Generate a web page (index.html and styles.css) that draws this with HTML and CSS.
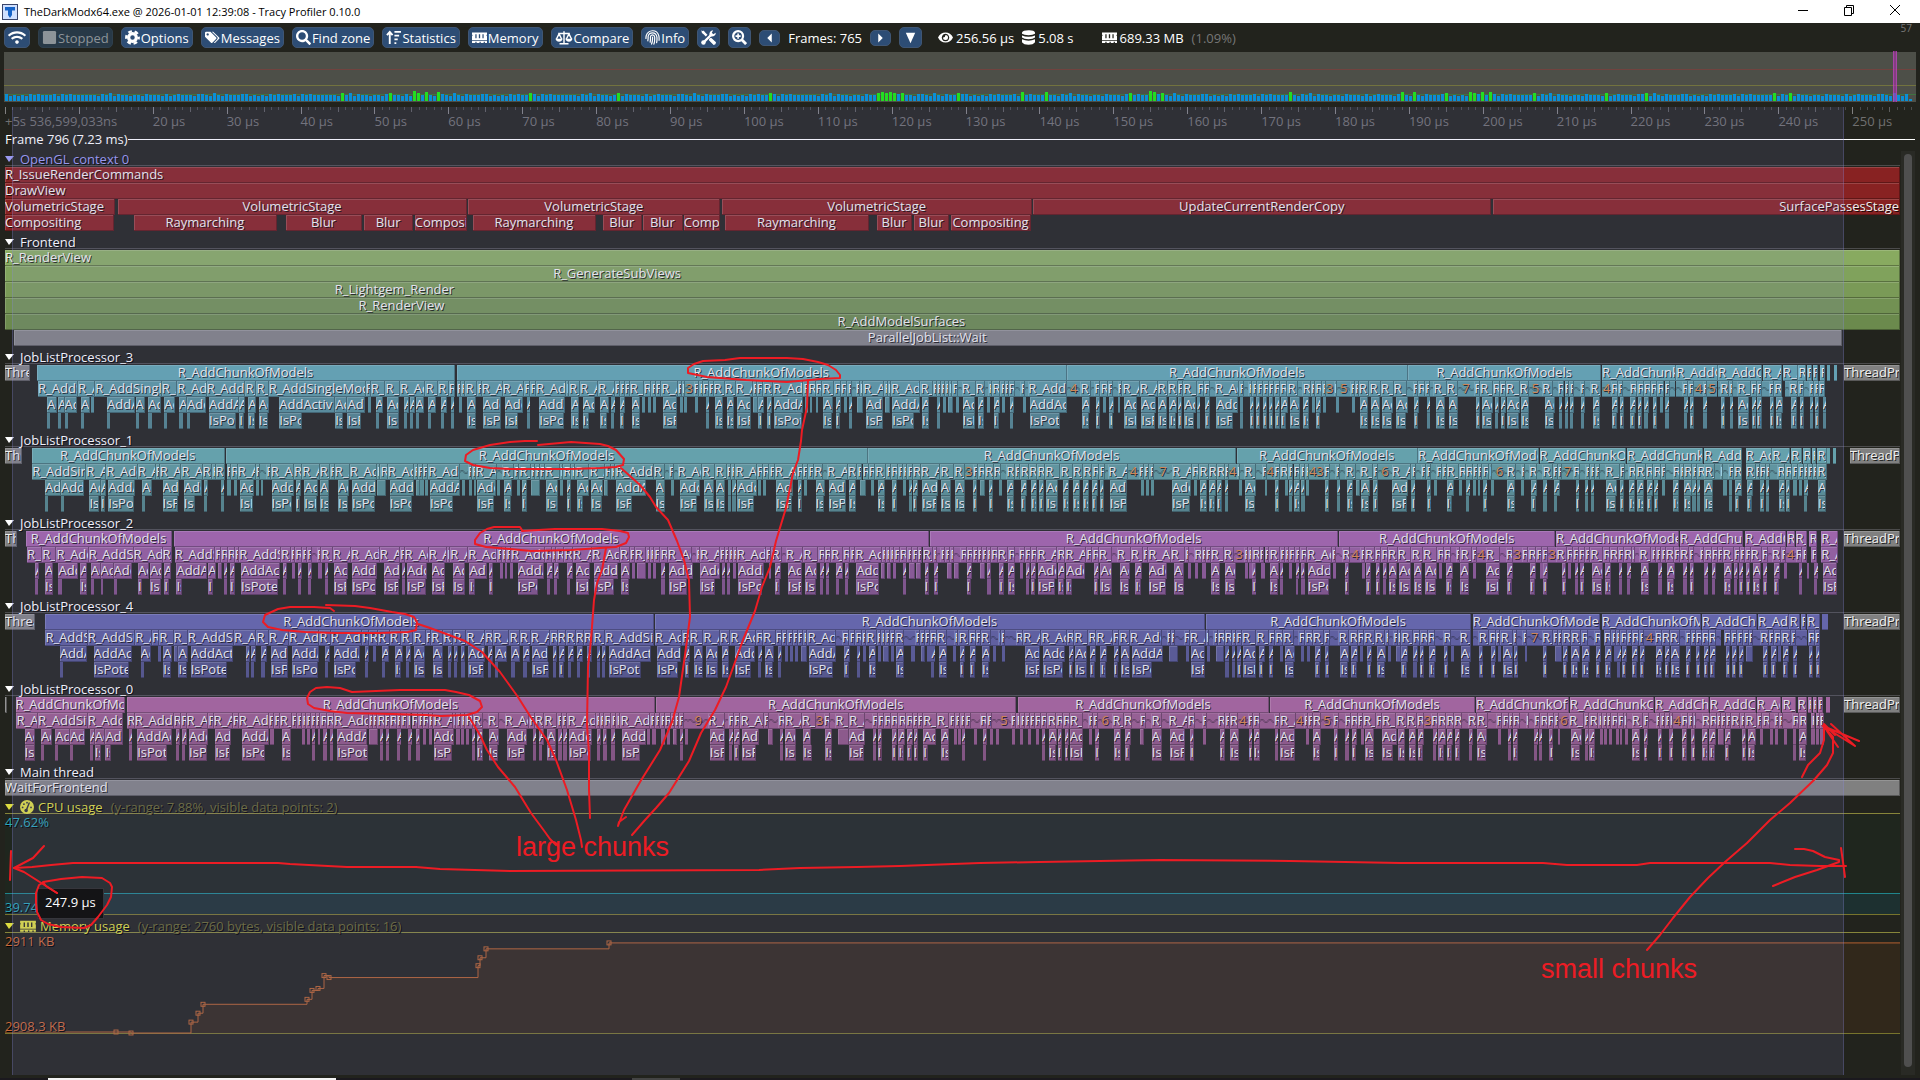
FILE: index.html
```html
<!DOCTYPE html>
<html lang="en">
<head>
  <meta charset="UTF-8" />
  <meta name="viewport" content="width=device-width, initial-scale=1" />
  <title>TheDarkModx64.exe - Tracy Profiler 0.10.0</title>
  <link rel="stylesheet" href="styles.css">
</head>
<body>
  <!-- Icons -->
  <svg class="defs" aria-hidden="true">
    <symbol id="i-wifi" viewBox="0 0 640 512"><path fill="currentColor" d="M634.91 154.88C457.74-8.99 182.19-8.93 5.09 154.88c-6.66 6.16-6.79 16.59-.35 22.98l34.24 33.97c6.14 6.1 16.02 6.23 22.4.38 145.92-133.68 371.3-133.71 517.25 0 6.38 5.85 16.26 5.71 22.4-.38l34.24-33.97c6.43-6.39 6.3-16.82-.36-22.98zM320 352c-35.35 0-64 28.65-64 64s28.65 64 64 64 64-28.65 64-64-28.65-64-64-64zm202.67-83.59c-115.26-101.93-290.21-101.82-405.34 0-6.9 6.1-7.12 16.69-.57 23.15l34.44 33.99c6 5.92 15.66 6.32 22.05.8 83.95-72.57 209.74-72.41 293.49 0 6.39 5.52 16.05 5.13 22.05-.8l34.44-33.99c6.56-6.46 6.33-17.06-.56-23.15z"/></symbol>
    <symbol id="i-stop" viewBox="0 0 16 16"><rect x="1" y="1" width="14" height="14" rx="1.5" fill="currentColor"/></symbol>
    <symbol id="i-gear" viewBox="0 0 16 16"><circle cx="8" cy="8" r="6.6" fill="none" stroke="currentColor" stroke-width="2.6" stroke-dasharray="3.9 3.01" stroke-dashoffset="1.9"/><circle cx="8" cy="8" r="4.1" fill="none" stroke="currentColor" stroke-width="3.4"/></symbol>
    <symbol id="i-tags" viewBox="0 0 18 16"><path fill="currentColor" fill-rule="evenodd" d="M0 2.500Q0 1 1.500 1H6.500L13.500 8Q14.200 8.800 13.500 9.600L8.800 14.300Q8 15 7.200 14.300L0 7.200ZM3.200 2.800A1.400 1.400 0 1 0 3.210 2.800Z"/><path fill="currentColor" d="M8.200 1H9.800L17 8Q17.800 8.800 17 9.600L12.300 14.300Q11.500 15 10.700 14.300L14.700 10.200Q16 8.800 14.700 7.500Z"/></symbol>
    <symbol id="i-search" viewBox="0 0 512 512"><path fill="currentColor" d="M505 442.700L405.300 343c-4.500-4.500-10.600-7-17-7H372c27.600-35.300 44-79.700 44-128C416 93.100 322.900 0 208 0S0 93.100 0 208s93.100 208 208 208c48.300 0 92.700-16.400 128-44v16.300c0 6.400 2.500 12.500 7 17l99.700 99.700c9.400 9.400 24.600 9.400 33.900 0l28.300-28.300c9.400-9.400 9.400-24.600.1-34zM208 336c-70.700 0-128-57.200-128-128 0-70.700 57.200-128 128-128 70.700 0 128 57.200 128 128 0 70.700-57.200 128-128 128z"/></symbol>
    <symbol id="i-sort" viewBox="0 0 16 16"><path fill="none" stroke="currentColor" stroke-width="2" d="M4 15V2M1 5.500L4 2l3 3.500M9 2h7M9 6h5M9 10h3.500M9 14h2"/></symbol>
    <symbol id="i-mem" viewBox="0 0 18 16"><path fill="currentColor" fill-rule="evenodd" d="M0 2H18V4.500Q16.500 5.300 18 6.500V11H0V6.500Q1.500 5.300 0 4.500ZM4 4V9H5.500V4ZM8.200 4V9H9.800V4ZM12.500 4V9H14V4ZM0 12H18V14.500H15.500V13H14V14.500H10.500V13H9V14.500H5.500V13H4V14.500H0Z"/></symbol>
    <symbol id="i-scale" viewBox="0 0 20 16"><path fill="none" stroke="currentColor" stroke-width="1.600" d="M10 1V14M5 15H15M3.500 3.500H16.500M4.500 4L1.500 10M4.500 4L7.500 10M15.500 4L12.500 10M15.500 4L18.500 10"/><path fill="currentColor" d="M0.500 9.500H8.500Q7.500 12.800 4.500 12.800T0.500 9.500ZM11.500 9.500H19.500Q18.500 12.800 15.500 12.800T11.500 9.500Z"/></symbol>
    <symbol id="i-finger" viewBox="0 0 16 16"><path fill="none" stroke="currentColor" stroke-width="1.300" stroke-linecap="round" d="M8 7.500Q8.300 12 7 15M5.500 13Q6 10 5.700 7.500Q6 5.300 8 5.300T10.300 7.500Q10.600 12 9.500 15M3 11.500Q3.500 9 3.300 7Q4 3 8 3T12.700 7.500Q13 10.500 12.400 13.500M1 9Q1 7.500 1.300 6Q3 1 8 .8T14.700 6Q15.200 8 15 11"/></symbol>
    <symbol id="i-tools" viewBox="0 0 16 16"><path fill="none" stroke="currentColor" stroke-width="2.500" d="M1.500 1.500L6 6M9.500 9.500L14.500 14.500M2 14L12 4"/><path fill="currentColor" d="M0 .5L3.500 1.500L4.500 4.500L2 4ZM9 9L11 8.500L16 13Q16 15.500 13.500 16L8.500 11ZM9 5.500Q8.500 1 13 .2L11.500 3L13 4.500L15.800 3Q15.500 7.500 10.500 7Z"/><circle cx="2.600" cy="13.400" r="2.400" fill="currentColor"/></symbol>
    <symbol id="i-plus" viewBox="0 0 16 16"><circle cx="6.500" cy="6.500" r="5.300" fill="none" stroke="currentColor" stroke-width="2.400"/><path fill="none" stroke="currentColor" stroke-width="1.700" d="M6.500 3.800V9.200M3.800 6.500H9.200"/><path stroke="currentColor" stroke-width="3" d="M10.500 10.500L15 15"/></symbol>
    <symbol id="i-left" viewBox="0 0 16 16"><path fill="currentColor" d="M11 2V14L5 8Z"/></symbol>
    <symbol id="i-right" viewBox="0 0 16 16"><path fill="currentColor" d="M5 2V14L11 8Z"/></symbol>
    <symbol id="i-down" viewBox="0 0 16 16"><path fill="currentColor" d="M3 3H13L8 14Z"/></symbol>
    <symbol id="i-eye" viewBox="0 0 18 16"><path fill="currentColor" fill-rule="evenodd" d="M0 8Q3 2 9 2T18 8Q15 14 9 14T0 8ZM9 3.500A4.500 4.500 0 1 0 9.010 3.500Z"/><path fill="currentColor" d="M9 5A3 3 0 1 1 6 8Q8.500 8.200 9 5Z"/></symbol>
    <symbol id="i-db" viewBox="0 0 14 16"><path fill="currentColor" d="M0 2.500Q1 .5 7 .3T14 2.500V4Q12 5.500 7 5.500T0 4ZM0 5.800Q3 7.200 7 7.200T14 5.800V8Q12 9.800 7 9.800T0 8ZM0 10Q3 11.500 7 11.500T14 10V13Q12 15.700 7 15.700T0 13Z"/></symbol>
    <symbol id="i-gauge" viewBox="0 0 16 16"><circle cx="8" cy="8" r="8" fill="currentColor"/><path fill="none" stroke="#2f3035" stroke-width="1.600" stroke-linecap="round" d="M7.500 11L10.500 3.500"/><g fill="#2f3035"><circle cx="7" cy="12" r="2"/><circle cx="3" cy="8.500" r="1"/><circle cx="4.500" cy="4.800" r="1"/><circle cx="8" cy="3" r="1"/><circle cx="12.600" cy="8.500" r="1"/></g></symbol>
  </svg>

  <header class="titlebar">
    <svg class="app-icon" viewBox="0 0 16 16"><rect x=".5" y=".5" width="15" height="15" fill="#cfe0ff" stroke="#39456b"/><path fill="#1664c8" d="M3 3H13V6.500H10V11L8 14L6 11V6.500H3Z"/></svg>
    <span class="title">TheDarkModx64.exe @ 2026-01-01 12:39:08 - Tracy Profiler 0.10.0</span>
    <button class="win" aria-label="Minimize"><svg viewBox="0 0 12 12"><path d="M1 6.500H11"/></svg></button>
    <button class="win" aria-label="Restore"><svg viewBox="0 0 12 12"><path d="M1.500 3.500H8.500V11.500H1.500ZM3.500 3.500V1.500H10.500V9.500H8.500"/></svg></button>
    <button class="win" aria-label="Close"><svg viewBox="0 0 12 12"><path d="M1 1L11 11M11 1L1 11"/></svg></button>
  </header>

  <nav class="toolbar">
    <button class="btn" aria-label="Connection"><svg class="wide"><use href="#i-wifi"/></svg></button>
    <button class="btn" disabled><svg><use href="#i-stop"/></svg>Stopped</button>
    <button class="btn"><svg><use href="#i-gear"/></svg>Options</button>
    <button class="btn"><svg><use href="#i-tags"/></svg>Messages</button>
    <button class="btn"><svg><use href="#i-search"/></svg>Find zone</button>
    <button class="btn"><svg><use href="#i-sort"/></svg>Statistics</button>
    <button class="btn"><svg><use href="#i-mem"/></svg>Memory</button>
    <button class="btn"><svg class="wide"><use href="#i-scale"/></svg>Compare</button>
    <button class="btn"><svg><use href="#i-finger"/></svg>Info</button>
    <button class="btn" aria-label="Tools"><svg><use href="#i-tools"/></svg></button>
    <button class="btn" aria-label="Zoom"><svg><use href="#i-plus"/></svg></button>
    <button class="btn small" aria-label="Previous frame"><svg><use href="#i-left"/></svg></button>
    <span>Frames: 765</span>
    <button class="btn small" aria-label="Next frame"><svg><use href="#i-right"/></svg></button>
    <button class="btn" aria-label="Frame sets"><svg><use href="#i-down"/></svg></button>
    <span class="stat first"><svg><use href="#i-eye"/></svg>256.56 µs</span>
    <span class="stat"><svg class="slim"><use href="#i-db"/></svg>5.08 s</span>
    <span class="stat mem"><svg><use href="#i-mem"/></svg>689.33 MB</span>
    <span class="dim">(1.09%)</span>
    <span class="fps">57</span>
  </nav>

  <div class="frames" id="frames"></div>

  <main class="view">
    <div class="ruler" id="ruler"></div>
    <div class="frame-line">Frame 796 (7.23 ms)</div>
    <div class="scroller">
      <div class="tracks">
        <div id="tracks"></div>

        <section class="plot cpu">
          <button class="track-head"><svg><use href="#i-gauge"/></svg>CPU usage <small>(y-range: 7.88%, visible data points: 2)</small></button>
          <div class="plot-area">
            <span>47.62%</span>
            <div class="cpu-fill"><span>39.74%</span></div>
          </div>
        </section>

        <section class="plot memory">
          <button class="track-head"><svg class="wide"><use href="#i-mem"/></svg>Memory usage <small>(y-range: 2760 bytes, visible data points: 16)</small></button>
          <div class="plot-area">
            <svg class="chart" id="chart" viewBox="0 0 1895 100" preserveAspectRatio="none"></svg>
            <span>2911 KB</span>
            <span>2908.3 KB</span>
          </div>
        </section>
      </div>
      <div class="scrollbar"><div class="thumb"></div></div>
    </div>
    <div class="selection" id="selection"></div>
  </main>

  <footer class="taskbar"><div class="task"></div><div class="task dim-task"></div></footer>

  <div class="tooltip">247.9 µs</div>

  <!-- Pen notes over the whole window -->
  <svg class="notes" viewBox="0 0 1920 1080" preserveAspectRatio="none">
    <path d="M688 373L688 368L694 364L703 361L725 360L740 358L787 358L803 359L818 362L828 365L836 370L840 375L840 378L820 379L810 380L787 382L746 380L720 378L707 377L688 373"/>
    <path d="M808 380L807 407L802 430L801 441L798 460L793 473L786 508L776 541L770 567L762 587L755 611L743 640L726 687L715 710L701 733L689 761L669 793L656 808L645 820L632 835"/>
    <path d="M537 441L525 441L510 442L490 445L473 450L466 455L465 461L473 465L490 468L510 469L571 469L600 468L616 467L623 465L624 459L616 450L608 446L600 444L571 442L538 445"/>
    <path d="M621 468L640 485L650 497L656 507L668 520L677 541L684 560L689 580L690 617L685 655L679 697L672 722L660 750L640 782L624 810L618 826L619 822L626 817"/>
    <path d="M522 530L520 527L494 527L487 529L480 533L475 540L475 544L486 547L510 549L531 551L571 550L600 548L616 547L626 543L629 537L628 533L620 531L602 529L555 529L522 531"/>
    <path d="M606 548L602 570L597 583L594 600L591 640L588 667L587 725L589 753L589 790L590 818"/>
    <path d="M334 611L330 608L314 607L290 607L278 609L265 615L263 622L268 627L282 630L305 632L335 633L380 633L408 632L416 630L417 622L414 617L405 614L392 612L370 608L355 606L326 605"/>
    <path d="M418 624L430 628L449 635L465 641L482 652L500 672L518 697L530 716L547 740L556 760L567 790L576 820L581 840L582 847"/>
    <path d="M352 692L340 688L327 687L316 688L310 692L307 698L308 704L314 708L330 711L347 713L392 714L425 715L441 716L467 715L477 712L482 707L480 701L469 695L456 692L445 690L400 690L352 692"/>
    <path d="M469 717L480 735L487 750L498 767L515 787L531 813L545 832L550 839L556 845"/>
    <path d="M14 868L32 867L51 865L73 863L278 863L290 864L347 867L416 867L440 869L510 871L759 870L800 868L857 867L900 866L980 863L1040 862L1160 860L1290 861L1400 863L1543 863L1567 865L1637 865L1650 863L1770 863L1790 865L1820 866L1846 866"/>
    <path d="M44 846L33 858L14 868L24 872L57 893M11 851L10 880M1795 849L1804 849L1813 851L1825 857L1839 860L1839 862L1817 870L1795 877L1773 886M1841 848L1843 862L1845 877"/>
    <path d="M57 893L46 886L43 882L61 879L82 877L102 878L110 883L112 887L111 897L107 905L98 917L91 925L84 928L61 927L48 924L41 920L37 912L36 903L36 893L39 885L44 882"/>
    <path d="M1647 950L1660 935L1673 918L1690 897L1708 878L1725 862L1747 843L1770 820L1790 803L1814 780L1827 765L1833 753L1833 737L1823 726L1859 741M1823 726L1855 746L1831 724M1838 747L1827 731M1802 777L1808 765L1820 753L1824 740L1824 724L1835 735"/>
    <text x="516" y="856">large chunks</text>
    <text x="1541" y="978">small chunks</text>
  </svg>

  <script src="timeline.js"></script>
</body>
</html>
```
FILE: styles.css
```css
* { box-sizing: border-box; margin: 0; padding: 0; }
html, body {
  height: 100%;
  overflow: hidden;
}
body {
  display: flex;
  flex-direction: column;
  position: relative;
  background: #22231d;
  color: #fff;
  font-family: "Open Sans", "Noto Sans", sans-serif;
  font-size: 13px;
  line-height: 16px;
}
button {
  font: inherit;
  color: inherit;
  border: 0;
  background: none;
}
.defs { display: none; }

/* Window title */
.titlebar {
  display: flex;
  align-items: center;
  height: 23px;
  flex: none;
  padding-left: 2px;
  background: #fff;
  color: #000;
  font-size: 11px;
}
.app-icon { width: 16px; height: 16px; margin-right: 6px; }
.title { flex: 1; }
.win { width: 46px; height: 23px; padding-right: 4px; }
.win svg {
  width: 12px;
  height: 12px;
  fill: none;
  stroke: #000;
  stroke-width: 1;
}

/* Toolbar */
.toolbar {
  display: flex;
  align-items: center;
  gap: 8px;
  height: 29px;
  flex: none;
  padding: 0 8px 0 4px;
  white-space: nowrap;
}
.toolbar svg { width: 15px; height: 15px; flex: none; }
.toolbar svg.wide { width: 18px; }
.toolbar svg.slim { width: 13px; }
.btn {
  display: flex;
  align-items: center;
  gap: 1px;
  height: 21px;
  padding: 0 3px;
  background: #2d4d75;
  border: 1px solid #3f5674;
  border-radius: 5px;
}
.btn.small { height: 16px; padding: 0 2px; }
.btn.small svg { height: 12px; }
.btn:hover { background: #3a6294; }
.btn:disabled { background: #283947; border-color: #2f3f4c; color: #8d9499; }
.stat { display: flex; align-items: center; gap: 3px; }
.stat.first { margin-left: 8px; }
.stat.mem { margin-left: 20px; }
.dim { color: #777; }
.fps {
  margin-left: auto;
  align-self: flex-start;
  font-size: 10px;
  line-height: 11px;
  color: #777;
}

/* Frame time overview */
.frames {
  position: relative;
  display: flex;
  align-items: flex-end;
  height: 50px;
  flex: none;
  margin: 0 4px 5px;
  padding: 0 0 1px 1px;
  background:
    linear-gradient(#70433f, #70433f) 0 17px / 100% 1px no-repeat,
    linear-gradient(#72733f, #72733f) 0 33px / 100% 1px no-repeat,
    linear-gradient(#3f7340, #3f7340) 0 42px / 100% 1px no-repeat,
    #4d4f48;
}
.bar { flex: none; width: 3px; margin-right: 1px; background: #0a8fd6; }
.bar.slow { background: #22dd22; }
.frames .mark {
  position: absolute;
  top: -1px;
  bottom: 0;
  right: 19px;
  width: 4px;
  background: rgba(170, 50, 170, .6);
  border: solid rgba(200, 80, 200, .5);
  border-width: 0 1px;
}

/* Timeline */
.view {
  position: relative;
  display: flex;
  flex-direction: column;
  flex: 1;
  min-height: 0;
  margin: 0 5px 3px;
}
.ruler { display: flex; height: 23px; overflow: hidden; flex: none; color: #707070; line-height: 14px; }
.step { flex: none; white-space: nowrap; }
.step span { display: block; }
.ticks { display: flex; height: 7px; }
.ticks i { flex: 1; height: 3px; border-left: 1px solid #4a4a4a; }
.ticks i:nth-child(6) { height: 5px; border-color: #5c5c5c; }
.ticks i:first-child { height: 7px; border-color: #808080; }
.frame-line {
  display: flex;
  align-items: center;
  height: 18px;
  flex: none;
}
.frame-line::after { content: ""; flex: 1; height: 1px; background: #fff; }
.scroller { display: flex; flex: 1; min-height: 0; }
.tracks { flex: 1; min-width: 0; }
.scrollbar { width: 14px; margin: 3px 0 0 1px; padding: 3px 3px 8px; background: #292a25; }
.thumb { height: 100%; border-radius: 4px; background: #4f4f4f; }

.selection {
  position: absolute;
  top: 0;
  bottom: 0;
  background: rgba(136, 136, 221, .133);
  border: solid rgba(136, 136, 221, .27);
  border-width: 0 1px;
}

/* Thread tracks */
.track-head {
  display: flex;
  align-items: center;
  width: 100%;
  height: 19px;
  padding-top: 2px;
  text-align: left;
  text-shadow: 1px 1px #000;
  background: linear-gradient(#4b4b4b, #4b4b4b) 0 17px / 100% 1px no-repeat;
}
.track-head::before {
  content: "";
  margin-right: 6px;
  border: solid transparent;
  border-width: 6px 5px 0 4px;
  border-top-color: currentColor;
}
.track-head.gl { color: #9a9af0; }
/* every zone shares the one cell and is placed by its margin */
.row { display: grid; grid-template: 16px / minmax(0, 1fr); }
.zone {
  grid-area: 1 / 1;
  overflow: hidden;
  white-space: nowrap;
  line-height: 15px;
  color: #f0f0f0;
  text-shadow: 1px 1px rgba(0, 0, 0, .8);
  border: solid rgba(0, 0, 0, .3);
  border-width: 0 1px 1px 0;
  box-shadow: inset 1px 1px rgba(255, 255, 255, .16);
}
.zone.mid { text-align: center; }
.zone.end { text-align: right; }
.zone.slim { border-right: 0; box-shadow: none; }
.zone.merged {
  text-align: center;
  color: #d98545;
  border-right: 0;
  box-shadow: inset 0 1px rgba(255, 255, 255, .1);
  background-image:
    linear-gradient(45deg, transparent 40%, rgba(0, 0, 0, .2) 40%, rgba(0, 0, 0, .2) 60%, transparent 60%),
    linear-gradient(-45deg, transparent 40%, rgba(0, 0, 0, .2) 40%, rgba(0, 0, 0, .2) 60%, transparent 60%);
  background-size: 8px 4px;
  background-position: 0 6px, 4px 6px;
  background-repeat: repeat-x;
}

.gpu .zone { background-color: #882222; }
.main .zone { background-color: #808080; }
.front .row:nth-child(1) .zone { background-color: #88aa60; }
.front .row:nth-child(2) .zone { background-color: #80a25c; }
.front .row:nth-child(3) .zone { background-color: #7a9a57; }
.front .row:nth-child(4) .zone { background-color: #729153; }
.front .row:nth-child(5) .zone { background-color: #6b8a4d; }
.front .row:nth-child(6) .zone { background-color: #808080; }
.job3 .row:nth-child(1) .zone { background-color: #5fa4ad; }
.job3 .row:nth-child(2) .zone { background-color: #59979f; }
.job3 .row:nth-child(3) .zone { background-color: #538c94; }
.job3 .row:nth-child(4) .zone { background-color: #4f8289; }
.job1 .row:nth-child(1) .zone { background-color: #60a5a6; }
.job1 .row:nth-child(2) .zone { background-color: #5a9898; }
.job1 .row:nth-child(3) .zone { background-color: #548d8d; }
.job1 .row:nth-child(4) .zone { background-color: #4f8383; }
.job2 .row:nth-child(1) .zone { background-color: #a160a6; }
.job2 .row:nth-child(2) .zone { background-color: #945a99; }
.job2 .row:nth-child(3) .zone { background-color: #89548d; }
.job2 .row:nth-child(4) .zone { background-color: #7e4f83; }
.job4 .row:nth-child(1) .zone { background-color: #6061a6; }
.job4 .row:nth-child(2) .zone { background-color: #5a5b99; }
.job4 .row:nth-child(3) .zone { background-color: #54558d; }
.job4 .row:nth-child(4) .zone { background-color: #4f5083; }
.job0 .row:nth-child(1) .zone { background-color: #a66096; }
.job0 .row:nth-child(2) .zone { background-color: #995a8a; }
.job0 .row:nth-child(3) .zone { background-color: #8d5480; }
.job0 .row:nth-child(4) .zone { background-color: #834f77; }
.tracks .row:nth-child(n) .zone.thread { background-color: #808080; }

/* Plots */
.plot .track-head {
  color: #dcdc40;
  background: linear-gradient(#86863a, #86863a) 0 17px / 100% 1px no-repeat;
}
.plot .track-head svg { width: 14px; height: 14px; margin-right: 4px; }
.plot .track-head svg.wide { width: 16px; }
.plot .track-head small { margin-left: 8px; font-size: 13px; color: #686830; }
.plot-area {
  position: relative;
  display: flex;
  flex-direction: column;
  justify-content: space-between;
  height: 100px;
  border-bottom: 1px solid #77742c;
  line-height: 14px;
  text-shadow: 1px 1px #000;
}
.cpu .plot-area { background: #1f261e; color: #2aa5b8; }
.cpu-fill { height: 21px; padding-top: 6px; border-top: 1px solid #20858c; background: #1d3030; }
.memory .plot-area { color: #c96a3a; }
.memory .plot-area span { position: relative; }
.chart { position: absolute; inset: 0; width: 100%; height: 100%; overflow: visible; }
.chart .area { fill: #e86a10; fill-opacity: .08; }
.chart .line { fill: none; stroke: #b5622f; stroke-width: 1; }
.chart rect { fill: none; stroke: #b5622f; stroke-width: 1; }

/* Desktop strip under the window */
.taskbar { display: flex; gap: 296px; height: 2px; flex: none; padding-left: 48px; background: #1b191e; }
.task { width: 288px; background: #f4f4f4; }
.dim-task { width: 48px; background: #444; }

.tooltip {
  position: absolute;
  left: 37px;
  top: 888px;
  padding: 6px 7px 8px;
  line-height: 15px;
  background: #141416;
  border: 1px solid #36363c;
}
.notes {
  position: absolute;
  inset: 0;
  width: 100%;
  height: 100%;
  pointer-events: none;
}
.notes path { fill: none; stroke: #ed1c24; stroke-width: 2; stroke-linejoin: round; stroke-linecap: round; }
.notes text { fill: #ed1c24; font: 27px "Liberation Sans", Arial, sans-serif; }
```
FILE: timeline.js
```js
// Zone positions are in timeline units, "@n" moves the origin of what follows.
const START = 12;
const SPAN = 4643;

// chunks: start-end, a trailing "." is a zone too short for a label
// model: start of each zone up to the next, ":n" merged zones, "~" merged, "|" end of run
// calls: start.width[.width of the nested call]
const jobs = [
  {
    name: 'JobListProcessor_3', cls: 'job3', thread: [12, 74], last: 4518,
    chunks: '91-1114 1119-2613 2614-3449 3450-3923 3925-4106 4107-4208 4209-4318 4320-4366 4368-4404 4406-4425 4427-4440 4441-4455 4460-4472 4476-4483. 4493-4501.',
    model: `93 191 233 396 434 506 601 628 658 896 908 944 980 1042 1073 1099 1114| 1119 1129 1140 1169 1180 1231 1284 1299 1313 1387 1394 1421 1465 1506 1519 1530 1543
      @1568 9 28 38 52 92 102 110:3 131 145 153 168 180 207 234 276 286 302 326 400 412 430 446 476 492 508 519~ 528 538 547 598 607 615 687 717 727 737 747 757 765 780~ 788 822 845~ 853 863 883 893 903 918~ 932 942~ 951 1046:4 1079 1104~ 1113 1128 1146 1158~ 1170 1182 1224 1268 1293 1317 1330 1365 1381 1397~ 1408 1468 1480~ 1490 1500 1512 1526 1540 1553
      @3136 0 18 45~ 55 75 86 103 112:3 132 140:5 172 183 193 219 247 278 312~ 325 338 355 368~ 376 408 435:7 476 490 521 538 553 587 610:5 642 670~ 680 697 709 720~ 735 748~ 760 787| 790:4 811 828 840~ 857 875 891 908 924 942 955~ 968| 970~ 985 1000 1015:4 1036 1046:5 1070| 1073~ 1078 1100 1111~ 1120 1153 1168 1181~ 1197 1211 1231| 1237~ 1247 1270 1284~ 1296 1309 1320 1336|`,
    calls: `115.24.8 142.16.8 158.31.8 198.22.8 223.7 262.68.8 332.22.8 363.31.8 402.27.8 439.18.8 458.47.8 512.73.66 586.14.12 608.18.16 634.24.22 684.136.55 821.28.18 851.44.33 902.7 920.19.8 949.29.28 990.12.8 1004.12.8 1018.20.8 1049.18.8 1080.16.8 1104.8.8 1125.7 1145.22.22 1183.45.44 1236.46.34 1290.8.8 1321.62.60 1400.18.18 1427.30.16 1470.22.16 1497.9.8 1519.12.10 1547.22.22
      @1568 5.6 20.8 31.8 56.35.34 98.6 108.6 135.7 162.8.8 184.20.20 212.19.18 238.34.34 276.12 290.14.10 312.12.10 328.72.68 405.6 416.6 430.7 449.24.22 479.14.12 500.6 512.8.8 532.14 553.42.42 600.12 618.68.52 691.18.16 728.8.8 742.8 755.12 774.7 790.30.30 828.14.14 850.7 866.16.14 887.8 906.10.8 938.7 955.90.74 1083.20.18 1116.12.12 1134.7 1150.12.10 1170.7 1186.32.32 1228.36.34 1270.20.20 1297.18.16 1318.10.10 1333.28.24 1365.8.8 1384.12.12 1412.52.40 1470.7.7 1494.10.10 1509.10.10 1526.10.10 1542.10.10 1556.12.12
      @3136 2.18.12 24.24.24 56.16.14 78.7 88.12.10 105.8 137.7 176.8 196.20.20 223.22.22 250.28.24 285.28.24 328.12.10 359.8.8 383.22.22 413.22.22 480.10.10 495.26.24 527.10.8 541.12.10 556.32.30 591.20.20 648.26.24 684.8.8 697.8.8 710.10.8 737.10.8 767.18.18 813.14.12 832.12.10 858.14.12 876.12.12 893.10.8 914.10.10 931.7 944.9.8 990.9.8 1004.10.10 1037.8.8 1081.10.10 1102.8.8 1122.28.28 1156.9.9 1168.12.12 1200.10.10 1214.18.16 1253.14.14 1273.10.10 1298.8.8 1311.10.10 1330.8.8`
  },
  {
    name: 'JobListProcessor_1', cls: 'job1', thread: [12, 54], last: 4532,
    chunks: '77-551 554-2126 2127-3028 3030-3473 3474-3770 3772-3984 3986-4173 4175-4269 4277-4341 4342-4386 4388-4416 4418-4438 4440-4450 4452-4475 4477-4483. 4491-4498.',
    model: `79 211 260 337 381 391 444 496 520 528 551| 555 566 582 626 636~ 652 663 720 740 783 808 820 857 923 932 950 1014 1023 1035 1049 1126~ 1146 1156 1165 1218~ 1230 1259 1272 1300 1311 1322 1335 1372 1380 1400 1409 1444 1482 1497 1507
      @1568 33 60~ 70 83~ 92 151 184 212 223 233 286 300 317 330 384 398 412 426 449~ 458 509 532 545 560 576 603 615 632 644 655 668 688 736 770 795:3 815 828 845 866 885~ 897 918 932 953 973 993 1030 1060 1085 1108 1125 1138~ 1147 1196:4 1222 1235 1248 1260:7 1303 1352 1370 1393 1413 1432 1442:4 1462 1470~ 1480 1508~ 1523 1535:4 1553
      @3136 0 20 33 50 62 70:43 108 122~ 135 146~ 160 185~ 196 228 240:6 274 322 333~ 345 358 370~ 382 397 408 438 455 472 484 496 513 520:6 555 577~ 590 600~ 610 630~ 643 668 680 690:7 718 735~ 748 760 772 785~ 796 832 845~ 853 873 896 915 933 945~ 962 980 990 1010 1022 1040 1065~ 1078 1086~ 1098 1112 1133| 1141 1165 1175 1190 1200~ 1218 1238 1255 1270 1283 1293 1305 1316 1339|`,
    calls: `110.38.8 149.56.8 219.28.24 247.12.10 265.66.62 348.24.8 398.40.38 450.44.28 500.10.8 541.8.8 556.9 573.7 588.34.32 627.7 638.7 665.54.50 724.14.12 745.34.32 784.22.22 828.26.24 862.58.56 924.22 955.58.54 1018.10 1030.8 1041.8 1053.74.56 1132.7 1150.7 1160.7 1169.45.40 1218.8 1235.18.16 1267.8 1278.14.14 1300.22 1338.30.30 1372.7 1388.10.10 1414.28.14 1448.28.26 1480.10 1509.74.40
      @1568 38.24.24 76.8 98.50.42 157.24.24 186.22.22 216.7.7 226.8.8 238.48.42 288.8 300.8 333.42.40 386.12.10 402.7 430.22.20 462.42.42 512.18.18 540.14 567.7 582.18.18 618.12.12 645.7 658.8.8 668.12.10 691.38.36 737.26.24 772.24.24 816.10.10 834.10 855.10.10 880.7 899.18.16 933.14.12 958.14.14 978.12.12 995.30.28 1036.16.14 1061.18.18 1085.14.14 1107.14.12 1127.10.10 1151.42.42 1228.7 1240.7 1252.7 1303.46.44 1356.8 1372.16.16 1394.16.14 1413.14.14 1432.8.8 1468.7 1482.26.24 1530.7 1556.10.10
      @3136 12.8 22.10.8 34.14.14 52.10.8 64.7 111.10.10 140.8.8 164.16.14 186.10 198.22.20 229.10.10 274.40.36 322.9.9 360.10.9 378.7 408.18.14 439.7 456.9.8 474.6 484.6 498.9.9 516.7 556.20.20 590.7 616.14.12 645.8.8 672.14.7 724.9.9 747.8.8 762.8.8 798.28.24 833.10.10 855.14.14 875.16.16 899.14.12 916.9.9 936.7 963.14.14 989.20.18 1010.8.8 1022.8.8 1040.22.22 1086.9 1100.7.7 1115.18.10 1144.16.12 1176.9.9 1191.8.7 1222.16.16 1240.10.10 1258.8 1272.7 1285.8.7 1318.20.20`
  },
  {
    name: 'JobListProcessor_2', cls: 'job2', thread: [12, 42], last: 4518,
    chunks: '64-421 426-2276 2278-3279 3281-3810 3812-4114 4116-4271 4275-4376 4378-4397 4399-4427 4433-4452 4462-4502',
    model: `66 103 138 217 327 398 420| 428 527 541 558 575 586 688 712 723 740 752 765~ 776 787 815 860 930 980 991 1050 1095 1103 1147 1218 1230 1240 1252 1335 1352 1363 1382 1403 1450 1518 1543 1555
      @1568 15 25 35 50 68 128~ 137 147 195 207 218 228 237 308 322 347~ 357 400 437 452 468 497 515 527 593 603 613 623 636 655 667 680 692 718 727~ 736 748 760 770~ 785 800 815 827 838 850 860 876 902 918~ 928 943 957 973 1022 1042 1093 1108 1124 1157~ 1168 1202 1232 1245 1300 1335 1345~ 1358 1376 1386 1398 1430 1456:3 1480 1490 1500 1518 1530 1542
      @3136 0 12 22 37 50 66 127 138~ 152 172:4 197 208 232 248 264 288 322 350 385 402 420~ 430 442 470 482:4 504 538~ 553 570:3 592 608 628 642 657:3 677 702 718 732 747 760 792 808 828 843 862 870~ 880 910 922 934 945 965 980 1002 1015~ 1028 1040 1058 1072 1085 1112 1127 1140 1153 1180 1195~ 1205 1228 1240:4 1263 1280 1290| 1302 1316| 1326 1366|`,
    calls: `86.10.7 110.20.20 143.48.8 197.17.15 222.24.8 246.32.7 278.46.8 338.28.10 367.30.28 402.16.12 432.76.14 510.18.12 533.10 548.8.7 563.12.12 590.96.90 692.12.8 716.7 730.10.8 755.10.7 780.8 796.8.7 817.36.34 862.62.58 940.40.38 984.8.7 997.48.46 1057.34.32 1110.30.30 1150.44.14 1198.10.10 1224.8 1236.7 1250.7 1268.64.50 1340.14.7 1358.12.7 1390.14.7 1410.36.34 1455.60.50 1522.22.20 1548.7 1560.22
      @1568 20.7 32.7 52.8.8 71.58.44 148.48.36 200.8.7 213.8.7 228.8 240.64.60 315.7 330.16.14 362.36.34 404.30.26 441.9.8 455.8.7 480.18.8 502.10.8 530.56.56 590.10 604.10 620.8 644.8.8 660.14 676.12 697.10.10 720.9.9 752.12 768.14 800.14.12 832.14 851.10.8 880.12.12 902.16.16 930.8 945.10.8 958.12.10 975.46.42 1024.16.14 1044.46.14 1112.12.10 1128.28.28 1175.26.24 1213.18.14 1246.46.42 1308.24.24 1342.8 1360.8 1378.9 1400.22.22 1433.26.24 1482.8 1492.7 1500.10.9 1522.8 1543.22.20
      @3136 0.8.8 22.7 38.8.7 52.10.8 68.56.52 130.8 158.12.12 201.7 211.12.12 234.12.10 252.10.8 266.20.18 292.30.30 328.20.20 356.28.26 390.7 407.16.14 442.22.22 473.7 505.34.32 557.14.12 612.14.12 637.7 645.12.10 691.10.9 706.7 722.8.8 735.9.9 765.26.24 796.16.14 830.8.8 850.9.8 884.20.20 927.8.8 948.20.18 988.8.8 1004.10.10 1040.8.8 1058.10.8 1088.20.18 1112.10.8 1125.9.9 1142.10.9 1158.20.18 1184.9.9 1210.14.12 1236.7 1272.8.7 1290.7 1308.9.7 1331.34.34`
  },
  {
    name: 'JobListProcessor_4', cls: 'job4', thread: [12, 85], last: 4518,
    label: 694,
    chunks: '109-1601 1604-2953 2955-3604 3608-3920 3924-4167 4169-4305 4307-4382 4384-4410 4413-4425 4427-4460 4464-4479.',
    model: `111 215 331 372 390 425 460 573 628 658 708 782 810 887 905 925 955 983 1012 1043 1056 1085 1110 1142 1188 1208 1248 1273 1300 1348 1366 1387 1410 1430 1453 1482
      @1568 33| 36 103 122 155 195 221 284 301 332 347 361 374 386 400 410 480~ 494 513 527 543 554 580 591 601 612 625 646~ 674 686 697 710 727 752~ 770 780 805 822 835 860~ 878 884 893~ 905~ 920 938 983 1045 1064 1098 1118 1158 1174 1200 1280~ 1290 1300 1310~ 1332 1347 1386 1395~ 1405 1415 1432 1450 1460 1475 1510 1540 1556
      @3136 7 35~ 45 62 80 107 122~ 143 170 190 206 232 258 267~ 277 288 297 325 343 362 380~ 400 418~ 440 468| 472~ 486 512 528 540 570 580~ 594 605:7 642 668 680 692 713 738 755~ 770 786| 793 812 823 834 850 862 880 893:4 918 935 955 980~ 993 1007 1018 1033 1050 1068~ 1080| 1088 1105 1120 1135 1148 1160~ 1176 1197 1210 1228 1252 1265~ 1280~ 1290| 1293 1310 1324|`,
    calls: `146.66.8 229.94.88 344.26.8 386.7 400.20.18 425.10 437.24.22 467.104.90 602.10.7 614.14.7 640.14.8 664.42.42 716.66.62 796.12.8 817.66.54 893.12.8 914.8 935.18.8 968.18.14 995.12.8 1015.26.26 1060.26.26 1098.10.8 1112.10.8 1130.10.8 1147.40.38 1195.12.8 1213.30.8 1253.20.8 1282.16.8 1304.38.40 1354.10.8 1370.14.12 1392.14.8 1413.16.8 1438.12.8 1462.8.8 1474.10.8 1492.104.78
      @1568 42.58.50 110.12.10 133.22.20 162.30.28 201.18.16 232.50.40 290.8.7 306.22.20 338.10.8 355.7 368.7 380.7 395.14 413.66.60 500.14.12 532.8.8 546.7 560.18.18 583.8 596.14 615.7 628.18.18 665.8 688.10 704.8 714.9.7 733.18.18 766.8 783.12.10 808.14.12 838.20.18 864.8 888.7 943.38.36 987.54.50 1050.12.10 1066.30.28 1102.14.12 1128.16.14 1160.14.12 1178.22.22 1205.76.50 1296.22 1338.7 1350.34.34 1389.7 1412.18 1434.8.8 1450.8.8 1463.9.9 1478.32.32 1517.14.10 1541.9.9
      @3136 0.8 11.26.24 52.7 66.7 86.14.12 111.10.9 148.20.18 175.16.14 196.7 214.12.9 238.22.20 265.7 284.12 297.16.14 327.12.8 342.12.10 366.16.14 402.10.9 420.6 443.26.22 488.10.9 518.10.9 534.7 546.26.24 573.10.9 599.7 645.10.10 674.18 693.12.10 714.20.16 741.18.16 774.12.10 796.18.16 818.8 826.9.8 838.12.10 862.14.12 882.12.10 920.18.16 942.14.12 958.22.22 994.12.10 1020.10.9 1038.12.10 1053.14.12 1093.10.10 1108.12.10 1125.12.10 1142.18 1184.12.12 1204.14.12 1220.7 1232.14.13 1258.9.9 1296.10.10 1313.10.10`
  },
  {
    name: 'JobListProcessor_0', cls: 'job0', thread: [12, 18], last: 4518,
    chunks: '38-305 311-1604 1607-2490 2494-3109 3112-3613 3616-3844 3846-4052 4055-4186 4189-4302 4304-4364 4367-4401 4404-4426 4430-4440 4442-4452 4454-4466 4474-4483.',
    model: `40 93 215 302| 311 330 425 443 457 510 523 570 585 658 672 685 714 728 740 750 762 773 785 800 818 903 913 924 942 955 972 983 998 1008 1025 1035 1050 1061 1110 1118 1130 1140 1158 1183~ 1195 1222~ 1236 1296 1310 1333 1365 1377 1390 1460 1470 1480 1498 1510 1520
      @1568 25 37 50 60 75 85 95 108~ 118:9 167 208~ 216 230 246 303 315~ 338 355 396 430:3 450 466~ 478 512 550~ 568 583 598 615 633 652 668 680 693 727 758 772 785 797 810~ 833 850 863~ 875:5 908 922 932 943 955 967 982 998 1020 1036 1053 1085~ 1098 1110 1123:6 1157 1185 1205~ 1224 1240~ 1253 1280~ 1295 1342 1360~ 1377 1390~ 1415 1433 1445 1466:4 1489 1502 1520~ 1553
      @3136 0 38:4 58 68 80 100:5 130 145~ 158 173 190 203 235 250 285 310 335 353:3 370 387 407 426 445~ 460 482 510~ 530 545 560 570 587~ 602 610~ 622 638 656 672 683:6 708 745 758 780 790 800 812 828 842 850~ 862 890 905~ 920 932 944 955 963:4 983 1000 1012 1020~ 1033 1053 1070 1080 1092 1105 1128 1140 1168 1182 1200~ 1210 1222 1232~ 1255 1272 1290| 1302 1312 1322 1332|`,
    calls: `60.26.26 100.26.8 135.36.8 171.38.8 220.12.8 232.24.16 258.42.14 316.8.8 336.86.74 430.12.8 446.12.8 463.46.44 527.38.36 593.66.56 662.9 691.22.22 740.8 752.7 763.8.8 778.7 792.8.8 808.8.8 826.74.76 904.22 930.9.8 945.9.8 973.9.8 1000.9.8 1020.10.8 1037.7 1050.7 1062.50.44 1118.9 1130.7 1142.8 1156.8.8 1168.16.14 1197.26.24 1243.48.44 1305.9.8 1320.12.8 1340.22.22 1368.8.8 1380.8.8 1394.56.54 1463.10.8 1478.10.8 1498.9.8 1524.58.44
      @1568 18.7 30.8 52.9 66.7 80.10 97.8.8 110.8 171.38.36 218.9.8 231.14.12 249.42.36 314.12 342.8.8 355.28.26 400.18.22 454.16.16 484.28 512.38.36 570.8.8 582.12.12 618.12.10 633.16.14 654.14.12 670.12.10 694.32.12 738.20.20 770.7 779.7 788.9.7 818.8 840.10.8 858.7 872.8 912.7 930.8 950.8 970.8 985.8.8 1001.20.18 1023.12.12 1040.10.9 1053.32.32 1100.7 1115.9.9 1161.18.18 1188.14.12 1225.10 1254.26.26 1298.38.38 1348.10.10 1380.7 1420.14.14 1446.22.22 1491.9.9 1503.16.16 1555.8.8
      @3136 0.36.36 63.7 80.20.18 132.10.10 160.8.8 176.12.10 198.8 208.22.22 250.36.26 290.16.16 315.18.18 337.16.14 375.9.8 388.18.14 408.16.14 428.14.14 462.10.8 482.24.22 535.7 558.9.8 570.14.14 622.9.8 634.9.8 660.10.9 680.7 713.26.22 747.10.8 758.14.14 784.8 794.8 806.7 822.8 832.7 845.8 862.20.20 891.10.9 926.10.9 954.9.9 984.14.13 1008.10.9 1034.14.14 1052.16.14 1074.14 1090.14.10 1132.10.9 1146.20.18 1176.8 1200.8 1213.8 1236.7 1258.7.7 1272.18.16 1302.9 1314.7 1323.9`
  }
];

const pct = v => (v / SPAN * 100).toFixed(3) + '%';

// leave out the letters that a short zone has no room for
const fit = (text, width) => text.slice(0, Math.ceil(width / 17));

function el(tag, cls, text) {
  const node = document.createElement(tag);
  if (cls) node.className = cls;
  if (text) node.textContent = text;
  return node;
}

// zones: {a, b, label, cls, at}, "at" is the label's own offset
function row(zones) {
  const line = el('div', 'row');
  zones.forEach(z => {
    const node = el('div', 'zone ' + (z.cls || ''), z.label);
    node.style.marginLeft = pct(z.a - START);
    node.style.width = pct(z.b - z.a);
    if (z.at) node.style.paddingLeft = pct(z.at - z.a);
    line.append(node);
  });
  return line;
}

function track(name, cls, rows, headCls) {
  const section = el('section', 'track');
  section.append(el('button', 'track-head ' + (headCls || ''), name));
  const body = el('div', cls);
  rows.forEach(r => body.append(row(r)));
  section.append(body);
  document.getElementById('tracks').append(section);
}

function tokens(text, fn) {
  let base = 0;
  text.trim().split(/\s+/).forEach(t => {
    if (t[0] === '@') base = +t.slice(1);
    else fn(t, base);
  });
}

function chunkRow(job) {
  const [from, to] = job.thread;
  const zones = [{ a: from, b: to, label: to > 20 ? fit('ThreadPr', to - from) : '', cls: 'thread' }];
  tokens(job.chunks, t => {
    const [a, b] = t.split('-').map(parseFloat);
    const plain = t.endsWith('.');
    const z = { a, b, label: plain ? '' : fit('R_AddChunkOfModels', b - a), cls: b - a > 335 ? 'mid' : plain ? 'slim' : '' };
    if (job.label && zones.length === 1) {
      z.at = job.label;
      z.cls = '';
    }
    zones.push(z);
  });
  zones.push({ a: job.last, b: 4655, label: fit('ThreadPr', 4655 - job.last), cls: 'thread' });
  return zones;
}

function modelRow(job) {
  const zones = [];
  let open = null;
  tokens(job.model, (t, base) => {
    const x = base + parseFloat(t);
    if (open) {
      open.b = x;
      if (!open.cls) open.label = fit(open.label, x - open.a);
      zones.push(open);
      open = null;
    }
    if (t.endsWith('|')) return;
    if (t.includes(':')) open = { a: x, label: t.split(':')[1], cls: 'merged' };
    else if (t.endsWith('~')) open = { a: x, label: '', cls: 'merged' };
    else open = { a: x, label: 'R_AddSingleMod' };
  });
  return zones;
}

function callRows(job) {
  const outer = [], inner = [];
  tokens(job.calls, (t, base) => {
    const [s, w, n] = t.split('.').map(Number);
    const a = base + s;
    outer.push({ a, b: a + w, label: w > 7 && n ? fit('AddActive', w) : '', cls: w > 9 ? '' : 'slim' });
    if (n) inner.push({ a, b: a + n, label: n > 8 ? fit('IsPote', n + 10) : '', cls: n > 9 ? '' : 'slim' });
  });
  return [outer, inner];
}

const list = (spec) => spec.map(([a, b, label, cls, at]) => ({ a, b, label, cls, at }));

track('OpenGL context 0', 'gpu', [
  list([[12, 4655, 'R_IssueRenderCommands']]),
  list([[12, 4655, 'DrawView']]),
  list([[12, 281, 'VolumetricStage'], [289, 1144, 'VolumetricStage', 'mid'], [1147, 1765, 'VolumetricStage', 'mid'],
    [1769, 2529, 'VolumetricStage', 'mid'], [2531, 3654, 'UpdateCurrentRenderCopy', 'mid'], [3657, 4655, 'SurfacePassesStage', 'end']]),
  list([[12, 279, 'Compositing'], [327, 679, 'Raymarching', 'mid'], [700, 887, 'Blur', 'mid'], [892, 1012, 'Blur', 'mid'],
    [1016, 1143, 'Composi'], [1159, 1459, 'Raymarching', 'mid'], [1477, 1572, 'Blur', 'mid'], [1575, 1673, 'Blur', 'mid'],
    [1675, 1764, 'Comp'], [1776, 2129, 'Raymarching', 'mid'], [2149, 2234, 'Blur', 'mid'], [2238, 2326, 'Blur', 'mid'],
    [2329, 2527, 'Compositing', 'mid']])
], 'gl');

track('Frontend', 'front', [
  list([[12, 4655, 'R_RenderView']]),
  list([[12, 4655, 'R_GenerateSubViews', '', 1355]]),
  list([[12, 4655, 'R_Lightgem_Render', '', 820]]),
  list([[12, 4655, 'R_RenderView', '', 878]]),
  list([[12, 4655, 'R_AddModelSurfaces', '', 2052]]),
  list([[34, 4512, 'ParallelJobList::Wait', 'mid']])
]);

jobs.forEach(job => track(job.name, job.cls, [chunkRow(job), modelRow(job), ...callRows(job)]));

track('Main thread', 'main', [list([[12, 4655, 'WaitForFrontend']])]);

// Ruler, 10 µs a step
const ruler = document.getElementById('ruler');
for (let i = 0; i < 26; i++) {
  const step = el('div', 'step');
  step.style.width = '3.869%';
  const ticks = el('div', 'ticks');
  for (let k = 0; k < 10; k++) ticks.append(el('i'));
  step.append(ticks, el('span', '', i === 0 ? '+5s 536,599,033ns' : i === 1 ? '' : i * 10 + ' µs'));
  ruler.append(step);
}

// Frame bars
const slow = { 84: 8, 96: 8, 102: 10, 103: 8, 105: 9, 108: 9, 131: 8, 153: 8, 191: 8, 218: 8, 219: 9, 220: 8, 221: 9, 222: 8, 224: 8,
  238: 8, 254: 9, 260: 9, 281: 8, 286: 10, 287: 9, 289: 8, 321: 9, 349: 9, 352: 9, 360: 8, 366: 9, 367: 8, 369: 9, 371: 9, 382: 8,
  400: 8, 410: 8, 442: 8, 446: 8 };
const heights = '756565767666757676666665768576656657666575676665776586576667';
const frames = document.getElementById('frames');
for (let i = 0; i < 477; i++) {
  const bar = el('div', slow[i] ? 'bar slow' : 'bar');
  bar.style.height = (slow[i] || (i === 476 ? 2 : +heights[i % 60])) + 'px';
  frames.append(bar);
}
frames.append(el('div', 'mark'));

const selection = document.getElementById('selection');
selection.style.left = (7 / 1910 * 100) + '%';
selection.style.width = (1832 / 1910 * 100) + '%';

// Memory plot, held value between points
const points = [[111, 99], [126, 100], [186, 89], [193, 80], [198, 71], [302, 66], [307, 57], [313, 55], [319, 42], [324, 44],
  [473, 32], [475, 24], [481, 15], [604, 9]];
let path = 'M0 99';
points.forEach(([x, y]) => path += `H${x}V${y}`);
path += 'H1895';
document.getElementById('chart').innerHTML =
  `<path class="area" d="${path}V100H0Z"/><path class="line" d="${path}"/>` +
  points.map(([x, y]) => `<rect x="${x - 2}" y="${y - 2}" width="4" height="4"/>`).join('');
```
